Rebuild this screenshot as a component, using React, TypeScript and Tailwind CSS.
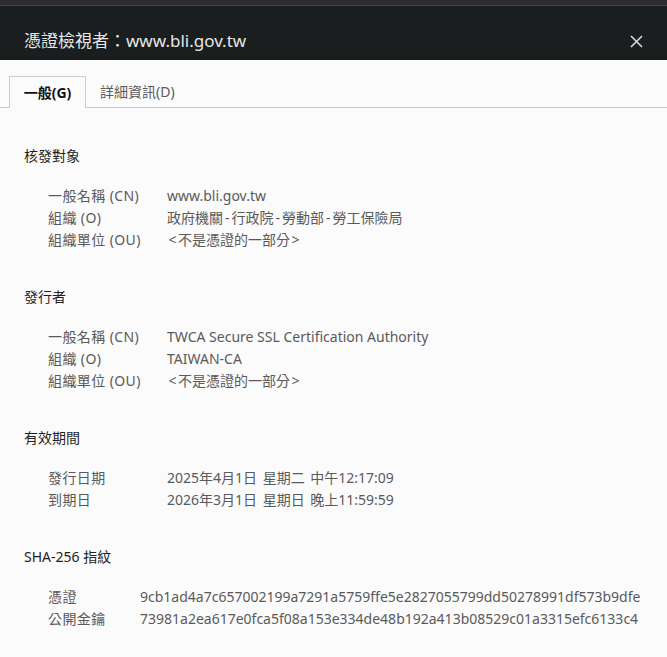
import React from "react";

const font = { fontFamily: '"Noto Sans", "Noto Sans CJK TC", sans-serif' };

type Row = [string, string, boolean?];

function Val({ text }: { text: string }) {
  const parts = text.split(/([-<>])/);
  return (
    <>
      {parts.map((p, i) =>
        p === "-" ? (
          <span key={i} className="mx-[2px]">-</span>
        ) : p === "<" || p === ">" ? (
          <span key={i} className="mx-[1.5px]">{p}</span>
        ) : (
          <React.Fragment key={i}>{p}</React.Fragment>
        )
      )}
    </>
  );
}

function Section({
  title,
  rows,
  valueCol,
  wide,
}: {
  title: string;
  rows: Row[];
  valueCol: string;
  wide?: boolean;
}) {
  return (
    <div className="mb-[37px]">
      <div className="h-5 text-[14px] leading-5 text-[#1f1f1f]">{title}</div>
      <div className="mt-[18px] pl-[24px]">
        {rows.map(([k, v, raw]) => (
          <div key={k} className="flex h-[22px] items-center text-[14px] text-[#5a5a5a]">
            <div className={valueCol + " shrink-0 tracking-[0.4px]"}>{k}</div>
            <div className={wide ? "whitespace-nowrap [word-spacing:2px]" : "whitespace-nowrap"}>
              {raw ? v : <Val text={v} />}
            </div>
          </div>
        ))}
      </div>
    </div>
  );
}

export default function App() {
  return (
    <div lang="zh-Hant-TW" className="h-[657px] w-[667px] overflow-hidden bg-[#fbfbfb]" style={font}>
      <div className="h-[5px] bg-[#2e2c31]" />
      <div className="h-px bg-[#46444a]" />
      <div className="flex h-[54px] items-end justify-between bg-[#1a1e1e] pb-[7px] pl-[24px] pr-[24px]">
        <div className="text-[17px] leading-6 text-[#e6e8e8]">憑證檢視者：www.bli.gov.tw</div>
        <svg width="13" height="13" viewBox="0 0 13 13" className="mb-[5px]">
          <path d="M1 1L12 12M12 1L1 12" stroke="#d8dada" strokeWidth="1.6" />
        </svg>
      </div>
      <div className="flex h-[48px] items-end border-b border-[#c9c9c9] pl-[9px]">
        <div className="-mb-px flex h-[32px] w-[77px] items-center justify-center border border-b-0 border-[#cccccc] bg-[#fbfbfb] text-[14px] font-bold text-[#111]">
          一般(G)
        </div>
        <div className="flex h-[31px] items-center pl-[14px] text-[14px] text-[#5a5a5a]">詳細資訊(D)</div>
      </div>
      <div className="pl-[24px] pt-[38px]">
        <Section
          title="核發對象"
          valueCol="w-[119px]"
          rows={[
            ["一般名稱 (CN)", "www.bli.gov.tw", true],
            ["組織 (O)", "政府機關-行政院-勞動部-勞工保險局"],
            ["組織單位 (OU)", "<不是憑證的一部分>"],
          ]}
        />
        <Section
          title="發行者"
          valueCol="w-[119px]"
          rows={[
            ["一般名稱 (CN)", "TWCA Secure SSL Certification Authority", true],
            ["組織 (O)", "TAIWAN-CA", true],
            ["組織單位 (OU)", "<不是憑證的一部分>"],
          ]}
        />
        <Section
          title="有效期間"
          valueCol="w-[119px]"
          wide
          rows={[
            ["發行日期", "2025年4月1日 星期二 中午12:17:09", true],
            ["到期日", "2026年3月1日 星期日 晚上11:59:59", true],
          ]}
        />
        <Section
          title="SHA-256 指紋"
          valueCol="w-[92px]"
          rows={[
            ["憑證", "9cb1ad4a7c657002199a7291a5759ffe5e2827055799dd50278991df573b9dfe", true],
            ["公開金鑰", "73981a2ea617e0fca5f08a153e334de48b192a413b08529c01a3315efc6133c4", true],
          ]}
        />
      </div>
    </div>
  );
}
